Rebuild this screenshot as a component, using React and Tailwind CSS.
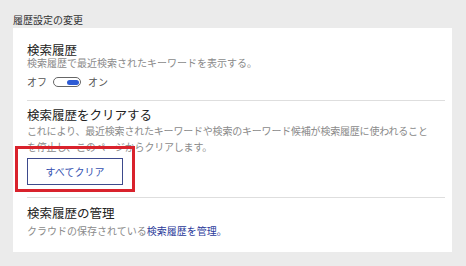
const font = { fontFamily: '"Noto Sans CJK JP", "Noto Sans", sans-serif' };

const App = () => {
  return (
    <div className="min-h-screen w-[466px] bg-[#ebebeb] pt-[14px] pl-[13px]" style={font}>
      <h2 className="h-[14px] text-[10px] leading-[12px] text-[#333]">履歴設定の変更</h2>

      <div className="w-[439px] bg-white pl-[14px] pr-[7px]">
        {/* 検索履歴 */}
        <div className="border-b border-[#dedede] pt-[15px] pb-[12px]">
          <div className="text-[12.5px] leading-[13px] text-[#222]">検索履歴</div>
          <div className="text-[10px] leading-[13px] text-[#8a8a8a]">検索履歴で最近検索されたキーワードを表示する。</div>
          <div className="mt-[7px] flex h-[12px] items-center text-[10px] leading-[12px] text-[#555]">
            <span>オフ</span>
            <div className="ml-[6px] flex h-[10px] w-[28px] items-center justify-end rounded-full border border-[#666] pr-[1.5px]">
              <div className="h-[5px] w-[12px] rounded-full bg-[#2d5bd4]" />
            </div>
            <span className="ml-[7px]">オン</span>
          </div>
        </div>

        {/* 検索履歴をクリアする */}
        <div className="border-b border-[#dedede] pt-[7px] pb-[12px]">
          <div className="text-[12.5px] leading-[14px] text-[#222]">検索履歴をクリアする</div>
          <div className="mt-[1px] text-[10px] leading-[16px] tracking-[-0.2px] text-[#8a8a8a]">
            これにより、最近検索されたキーワードや検索のキーワード候補が検索履歴に使われること
            <br />
            を停止し、このページからクリアします。
          </div>
          <div className="relative mt-[3px] w-[96px]">
            <button className="flex h-[27px] w-[96px] items-center justify-center border border-[#3d4a8c] bg-white text-[10px] text-[#3450b0]">
              すべてクリア
            </button>
            <div className="absolute left-[-12px] top-[-12px] h-[46px] w-[120px] border-[3px] border-[#d9222c]" />
          </div>
        </div>

        {/* 検索履歴の管理 */}
        <div className="pt-[8px] pb-[15px]">
          <div className="text-[12.5px] leading-[14px] text-[#222]">検索履歴の管理</div>
          <div className="mt-[5px] text-[10px] leading-[12px] text-[#8a8a8a]">
            クラウドの保存されている<span className="text-[#2b3a9a]">検索履歴を管理。</span>
          </div>
        </div>
      </div>
    </div>
  );
};

export default App;
